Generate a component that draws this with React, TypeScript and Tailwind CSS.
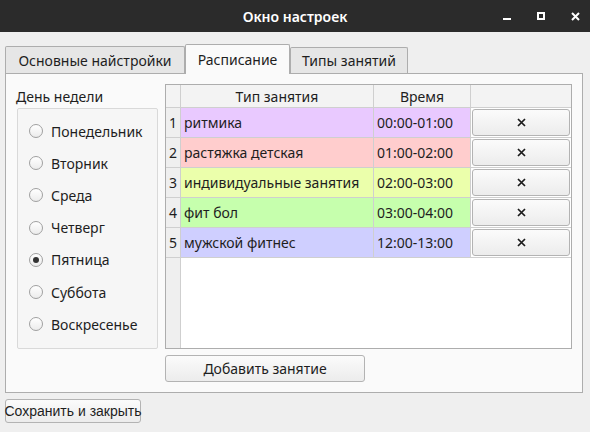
import React from "react";

const days = ["Понедельник", "Вторник", "Среда", "Четверг", "Пятница", "Суббота", "Воскресенье"];

const lessons = [
  { name: "ритмика", time: "00:00-01:00", color: "bg-[#e9c9ff]" },
  { name: "растяжка детская", time: "01:00-02:00", color: "bg-[#ffcdcd]" },
  { name: "индивидуальные занятия", time: "02:00-03:00", color: "bg-[#ebffab]" },
  { name: "фит бол", time: "03:00-04:00", color: "bg-[#c6ffad]" },
  { name: "мужской фитнес", time: "12:00-13:00", color: "bg-[#cfcfff]" },
];

function Radio({ checked }: { checked?: boolean }) {
  return (
    <span className="w-[14px] h-[14px] rounded-full border border-[#a0a0a0] bg-gradient-to-b from-[#ffffff] to-[#ececec] flex items-center justify-center">
      {checked && <span className="w-[6px] h-[6px] rounded-full bg-[#333333]" />}
    </span>
  );
}

function Cross() {
  return (
    <svg width="9" height="9" viewBox="0 0 9 9">
      <path d="M1 1 L8 8 M8 1 L1 8" stroke="#1a1a1a" strokeWidth="1.7" />
    </svg>
  );
}

export default function App() {
  return (
    <div
      className="w-[590px] h-[432px] bg-[#efefef] flex flex-col text-[14px] text-[#1e1e1e] overflow-hidden"
      style={{ fontFamily: '"Noto Sans", "Open Sans", sans-serif' }}
    >
      {/* Title bar */}
      <div className="h-[32px] bg-[#2b2b2b] flex items-center shrink-0">
        <div className="w-[130px]" />
        <div className="flex-1 text-center text-white font-semibold text-[14px]">Окно настроек</div>
        <div className="w-[130px] flex items-center justify-end gap-[26px] pr-[10px]">
          <span className="w-[8px] h-[2px] bg-white mt-[6px]" />
          <span className="w-[8px] h-[8px] border-2 border-white" />
          <svg width="9" height="9" viewBox="0 0 9 9">
            <path d="M1 1 L8 8 M8 1 L1 8" stroke="white" strokeWidth="2" />
          </svg>
        </div>
      </div>

      <div className="pl-[5px] pt-[12px] flex flex-col">
        {/* Tabs */}
        <div className="flex items-end h-[29px] relative z-10">
          <div className="w-[180px] h-[27px] border border-[#adadad] border-b-0 rounded-t-[2px] bg-[#e6e6e6] flex items-center justify-center">
            Основные найстройки
          </div>
          <div className="w-[105px] h-[30px] border border-[#adadad] border-b-0 rounded-t-[2px] bg-[#fafafa] flex items-center justify-center -mb-[1px]">
            Расписание
          </div>
          <div className="w-[118px] h-[26px] border border-[#adadad] border-b-0 rounded-t-[2px] bg-[#e6e6e6] flex items-center justify-center">
            Типы занятий
          </div>
        </div>

        {/* Panel */}
        <div className="w-[578px] h-[320px] border border-[#adadad] bg-[#fafafa] flex pt-[10px] pl-[10px]">
          {/* Days */}
          <div className="w-[149px] flex flex-col">
            <div className="h-[24px] flex items-center">День недели</div>
            <div className="w-[141px] h-[241px] border border-[#d9d9d9] rounded-[2px] bg-[#f6f6f6] flex flex-col pt-[6px] ml-[1px]">
              {days.map((d, i) => (
                <div key={d} className="h-[32.2px] flex items-center pl-[11px] gap-[8px]">
                  <Radio checked={i === 4} />
                  <span>{d}</span>
                </div>
              ))}
            </div>
          </div>

          {/* Table */}
          <div className="flex flex-col">
            <div className="w-[407px] h-[265px] border border-[#adadad] bg-white flex flex-col">
              <div className="h-[23px] flex border-b border-[#cfcfcf] bg-[#f3f3f3] shrink-0">
                <div className="w-[15px] border-r border-[#cfcfcf]" />
                <div className="w-[193px] border-r border-[#cfcfcf] flex items-center justify-center">Тип занятия</div>
                <div className="w-[97px] border-r border-[#cfcfcf] flex items-center justify-center">Время</div>
                <div className="flex-1" />
              </div>
              {lessons.map((l, i) => (
                <div key={l.name} className="h-[30px] flex border-b border-[#cfcfcf] shrink-0">
                  <div className="w-[15px] border-r border-[#cfcfcf] bg-[#efefef] flex items-center justify-center">{i + 1}</div>
                  <div className={`w-[193px] border-r border-[#cfcfcf] flex items-center pl-[3px] ${l.color}`}>{l.name}</div>
                  <div className={`w-[97px] border-r border-[#cfcfcf] flex items-center pl-[3px] ${l.color}`}>{l.time}</div>
                  <div className="flex-1 flex p-[1px]">
                    <button className="flex-1 rounded-[3px] border border-[#b3b3b3] bg-gradient-to-b from-[#fbfbfb] to-[#ececec] flex items-center justify-center">
                      <Cross />
                    </button>
                  </div>
                </div>
              ))}
              <div className="flex-1 flex">
                <div className="w-[15px] border-r border-[#cfcfcf] bg-[#efefef]" />
              </div>
            </div>
            <button className="mt-[6px] w-[200px] h-[27px] rounded-[3px] border border-[#b3b3b3] bg-gradient-to-b from-[#fbfbfb] to-[#ececec] flex items-center justify-center">
              Добавить занятие
            </button>
          </div>
        </div>

        <button
          className="mt-[6px] w-[136px] h-[24px] rounded-[3px] border border-[#b3b3b3] bg-gradient-to-b from-[#fbfbfb] to-[#ececec] flex items-center justify-center whitespace-nowrap text-[14px]"
          style={{ fontFamily: '"Liberation Sans", Arial, sans-serif' }}
        >
          Сохранить и закрыть
        </button>
      </div>
    </div>
  );
}
